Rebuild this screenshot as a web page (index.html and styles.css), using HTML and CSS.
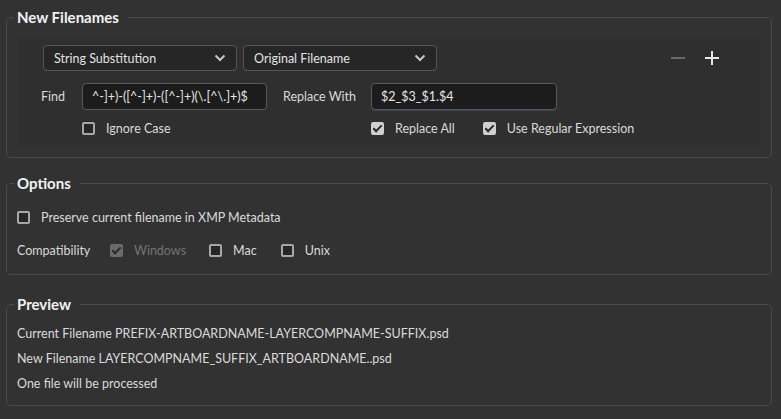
FILE: index.html
```html
<!DOCTYPE html>
<html lang="en">
  <head>
    <meta charset="UTF-8" />
    <title>Rename</title>
    <link rel="stylesheet" href="styles.css">
  </head>

  <body>
    <!-- New Filenames -->
    <fieldset class="group names">
      <legend>New Filenames</legend>
      <div class="panel">
        <div class="rule-row">
          <div class="select">
            <span>String Substitution</span>
            <svg class="chevron" width="12" height="8" viewBox="0 0 12 8"><polyline points="1.5,1.5 6,6 10.5,1.5" /></svg>
          </div>
          <div class="select">
            <span>Original Filename</span>
            <svg class="chevron" width="12" height="8" viewBox="0 0 12 8"><polyline points="1.5,1.5 6,6 10.5,1.5" /></svg>
          </div>
          <div class="rule-buttons">
            <span class="rule-btn minus"></span>
            <span class="rule-btn plus"></span>
          </div>
        </div>

        <div class="find-grid">
          <label class="field-label">Find</label>
          <input class="text-field" type="text" value="^-]+)-([^-]+)-([^-]+)(\.[^\.]+)$" />
          <label class="field-label replace-label">Replace With</label>
          <input class="text-field focused" type="text" value="$2_$3_$1.$4" />

          <label class="check check-ignore"><span class="box"></span>Ignore Case</label>
          <div class="check-pair">
            <label class="check"><span class="box checked"></span>Replace All</label>
            <label class="check"><span class="box checked"></span>Use Regular Expression</label>
          </div>
        </div>
      </div>
    </fieldset>

    <!-- Options -->
    <fieldset class="group options">
      <legend>Options</legend>
      <label class="check opt-line"><span class="box"></span>Preserve current filename in XMP Metadata</label>
      <div class="compat">
        <span class="compat-label">Compatibility</span>
        <label class="check disabled"><span class="box checked"></span>Windows</label>
        <label class="check mac"><span class="box"></span>Mac</label>
        <label class="check"><span class="box"></span>Unix</label>
      </div>
    </fieldset>

    <!-- Preview -->
    <fieldset class="group preview">
      <legend>Preview</legend>
      <div class="preview-line">Current Filename PREFIX-ARTBOARDNAME-LAYERCOMPNAME-SUFFIX.psd</div>
      <div class="preview-line">New Filename LAYERCOMPNAME_SUFFIX_ARTBOARDNAME..psd</div>
      <div class="preview-line">One file will be processed</div>
    </fieldset>
  </body>
</html>
```

FILE: styles.css
```css
* {
  box-sizing: border-box;
}

body {
  margin: 0;
  padding: 8px 9px 0 6px;
  background-color: #323232;
  color: #dadada;
  font-family: Lato, "Noto Sans", sans-serif;
  font-size: 12.5px;
}

/* --- Groups --- */

.group {
  margin: 0;
  padding: 0 11px 11px 11px;
  border: 1px solid #4a4a4a;
  border-radius: 5px;
}

.group legend {
  margin-left: -4px;
  padding: 0 9px 0 3px;
  height: 18px;
  line-height: 18px;
  font-size: 15px;
  font-weight: bold;
  color: #f2f2f2;
}

.options {
  margin-top: 16px;
  padding: 0 10px 8px 10px;
}

.preview {
  margin-top: 20px;
  padding: 0 10px 9px 10px;
}

.options legend,
.preview legend {
  margin-left: -3px;
}

/* --- Inner panel --- */

.panel {
  margin-top: 12px;
  padding: 7px 12px 11px 23px;
  background-color: #2f2f2f;
  border-radius: 2px;
}

.rule-row {
  display: flex;
  align-items: center;
  gap: 6px;
  padding-left: 2px;
}

.select {
  display: flex;
  align-items: center;
  justify-content: space-between;
  width: 194px;
  height: 26px;
  padding: 0 10px 0 10px;
  background-color: #262626;
  border: 1px solid #555555;
  border-radius: 4px;
  color: #e2e2e2;
}

.chevron polyline {
  fill: none;
  stroke: #c8c8c8;
  stroke-width: 2;
}

.rule-buttons {
  margin-left: auto;
  margin-right: 29px;
  display: flex;
  align-items: center;
  gap: 20px;
}

.rule-btn {
  position: relative;
  width: 14px;
  height: 14px;
}

.rule-btn::before,
.rule-btn::after {
  content: "";
  position: absolute;
  background-color: #e6e6e6;
}

.rule-btn::before {
  left: 0;
  right: 0;
  top: 6px;
  height: 2px;
}

.minus::before {
  background-color: #6a6a6a;
}

.minus::after {
  display: none;
}

.plus::after {
  top: 0;
  bottom: 0;
  left: 6px;
  width: 2px;
}

/* --- Find / replace --- */

.find-grid {
  display: grid;
  grid-template-columns: 41px 185px 104px 186px;
  grid-template-rows: 27px 13px;
  row-gap: 12px;
  align-items: center;
  margin-top: 12px;
}

.field-label {
  color: #dadada;
}

.replace-label {
  padding-left: 16px;
}

.text-field {
  width: 100%;
  height: 27px;
  padding: 0 9px;
  background-color: #1c1c1c;
  border: 1px solid #5a5a5a;
  border-radius: 4px;
  color: #e6e6e6;
  font-family: inherit;
  font-size: 12.5px;
  outline: none;
}

.focused {
  box-shadow: 0 2px 0 -1px #33445a;
}

.check-ignore {
  grid-column: 2;
}

.check-pair {
  grid-column: 4 / span 2;
  display: flex;
  gap: 28px;
}

/* --- Checkbox --- */

.check {
  display: flex;
  align-items: center;
  gap: 11px;
  white-space: nowrap;
  color: #dadada;
}

.box {
  position: relative;
  flex: none;
  width: 13px;
  height: 13px;
  border: 2px solid #a8a8a8;
  border-radius: 2px;
  background-color: #262626;
}

.box.checked {
  background-color: #cfcfcf;
  border-color: #cfcfcf;
}

.box.checked::after {
  content: "";
  position: absolute;
  left: 2px;
  top: -1px;
  width: 3px;
  height: 7px;
  border: solid #2a2a2a;
  border-width: 0 2px 2px 0;
  transform: rotate(45deg);
}

.disabled {
  color: #737373;
}

.disabled .box.checked {
  background-color: #6b6b6b;
  border-color: #6b6b6b;
}

/* --- Options --- */

.opt-line {
  margin-top: 18px;
}

.compat {
  display: flex;
  align-items: center;
  margin-top: 18px;
  margin-bottom: 8px;
}

.compat-label {
  width: 93px;
}

.compat .check {
  margin-right: 24px;
}

.compat .disabled {
  margin-right: 23px;
}

/* --- Preview --- */

.preview-line {
  height: 25px;
  line-height: 25px;
}

.preview-line:first-of-type {
  margin-top: 8px;
}
```
